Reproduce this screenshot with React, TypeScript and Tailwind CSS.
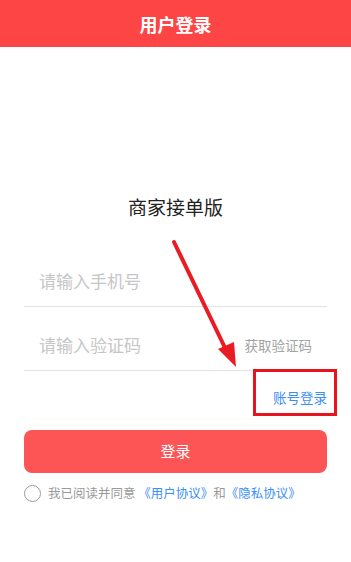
import React from 'react';

const font = "font-['Noto_Sans_CJK_SC','Noto_Sans',sans-serif]";

const App: React.FC = () => {
  return (
    <div className={`relative w-[351px] h-[562px] bg-white overflow-hidden ${font}`}>
      <div className="h-[47px] bg-[#fe4545] flex items-center justify-center">
        <h1 className="text-white text-[18px] font-bold leading-none">用户登录</h1>
      </div>

      <div className="px-6">
        <p className="mt-[147px] text-center text-[19px] leading-[26px] text-[#222]">商家接单版</p>

        <div className="mt-[39px] h-[48px] border-b border-[#e2e2e2] flex items-center pb-[3px] pl-[15px]">
          <span className="text-[17px] text-[#c6c6c6]">请输入手机号</span>
        </div>

        <div className="mt-[16px] h-[48px] border-b border-[#e2e2e2] flex items-center justify-between pb-[3px] pl-[15px] pr-[15px]">
          <span className="text-[17px] text-[#c6c6c6]">请输入验证码</span>
          <span className="text-[13.5px] text-[#a3a3a3]">获取验证码</span>
        </div>

        <div className="relative h-[52px] flex items-center justify-end">
          <span className="text-[13.5px] text-[#3a8ef6]">账号登录</span>
          <div className="absolute left-[229px] top-[-2px] w-[84px] h-[47px] border-[3px] border-[#e8141d]" />
        </div>

        <button className="mt-[7px] w-full h-[43px] rounded-lg bg-[#fd5555] text-white text-[15px]">登录</button>

        <div className="mt-[10px] flex items-center gap-[7px]">
          <span className="w-[17px] h-[17px] rounded-full border border-[#9a9a9a]" />
          <p className="text-[12.5px] text-[#9a9a9a] leading-[20px]">
            我已阅读并同意 <span className="text-[#3a8ef6]">《用户协议》</span>和<span className="text-[#3a8ef6]">《隐私协议》</span>
          </p>
        </div>
      </div>

      <svg className="absolute left-0 top-0 pointer-events-none" width="351" height="562" viewBox="0 0 351 562">
        <line x1="174" y1="242" x2="228" y2="354" stroke="#ea1b22" strokeWidth="4" strokeLinecap="round" />
        <polygon points="236,367 218,349 234,342" fill="#ea1b22" />
      </svg>
    </div>
  );
};

export default App;
